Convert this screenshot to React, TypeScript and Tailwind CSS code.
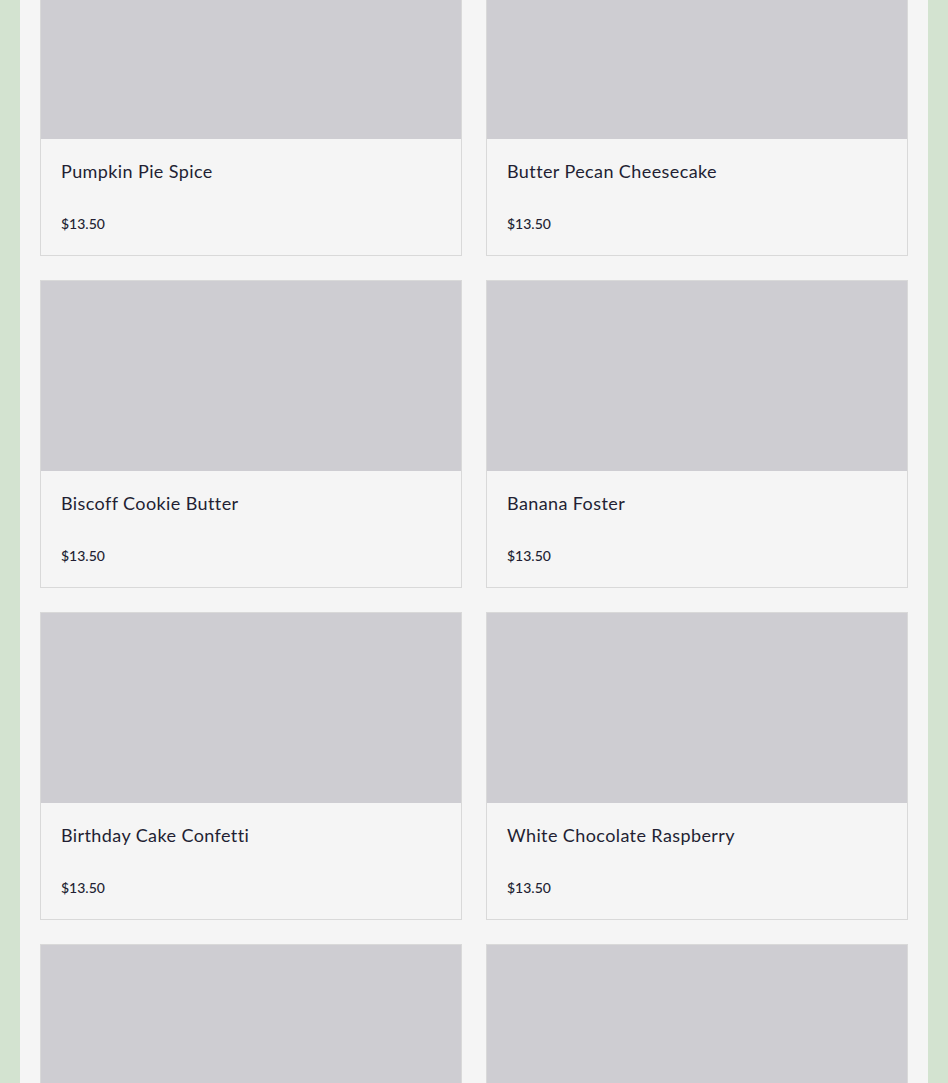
const products = [
  { name: "Pumpkin Pie Spice", price: "$13.50" },
  { name: "Butter Pecan Cheesecake", price: "$13.50" },
  { name: "Biscoff Cookie Butter", price: "$13.50" },
  { name: "Banana Foster", price: "$13.50" },
  { name: "Birthday Cake Confetti", price: "$13.50" },
  { name: "White Chocolate Raspberry", price: "$13.50" },
];

function ProductCard({ name, price }: { name: string; price: string }) {
  return (
    <div className="flex flex-col h-[308px] border border-[#d9d9d9] bg-[#f5f5f5]">
      <div className="h-[190px] bg-[#cecdd2]"></div>
      <div className="flex flex-col flex-1 px-5 pt-5">
        <p className="text-[18px] leading-6 tracking-[0.4px] text-[#231f33]">{name}</p>
        <p className="mt-[31px] text-[14px] leading-5 font-medium text-[#231f33]">{price}</p>
      </div>
    </div>
  );
}

export default function App() {
  return (
    <div
      className="flex h-[1083px] w-full overflow-hidden bg-[#d3e3d0] px-5"
      style={{ fontFamily: '"Lato", "Open Sans", sans-serif' }}
    >
      <div className="flex-1 bg-[#f5f5f5] px-5">
        <div className="-mt-[52px] grid grid-cols-2 gap-6">
          {products.map((p) => (
            <ProductCard key={p.name} name={p.name} price={p.price} />
          ))}
          <div className="h-[308px] border border-[#d9d9d9] bg-[#cecdd2]"></div>
          <div className="h-[308px] border border-[#d9d9d9] bg-[#cecdd2]"></div>
        </div>
      </div>
    </div>
  );
}
